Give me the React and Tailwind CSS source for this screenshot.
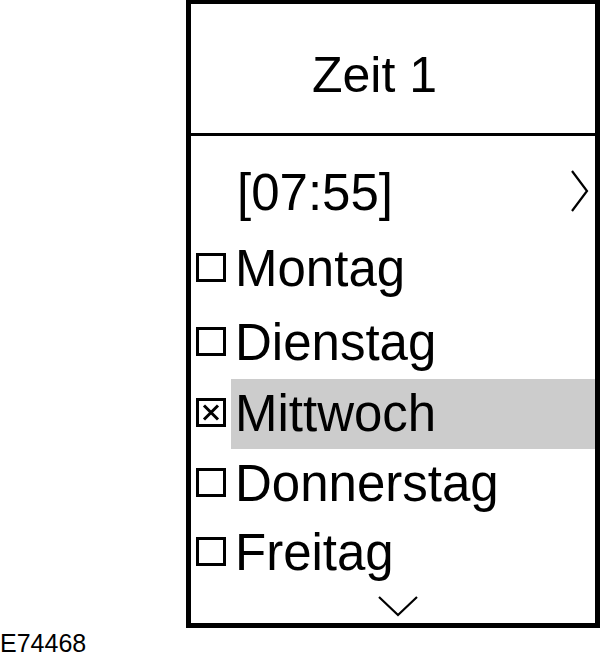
import React from "react";

const font = { fontFamily: '"Liberation Sans", Arial, sans-serif' };

function Box({ checked }) {
  return (
    <div className="w-[30px] h-[29px] border-[3px] border-black bg-white shrink-0 mt-[19px] ml-[5px] relative">
      {checked && (
        <svg className="absolute inset-0" width="24" height="23" viewBox="0 0 24 23">
          <line x1="5" y1="4.5" x2="19" y2="18.5" stroke="black" strokeWidth="3" />
          <line x1="19" y1="4.5" x2="5" y2="18.5" stroke="black" strokeWidth="3" />
        </svg>
      )}
    </div>
  );
}

function Row({ label, h, checked, selected }) {
  return (
    <div className={`flex items-start ${h}`}>
      <Box checked={checked} />
      <div
        className={`ml-[5px] pl-[4px] flex-1 leading-[70px] h-[70px] text-[51px] text-black ${
          selected ? "bg-[#cccccc]" : ""
        }`}
      >
        {label}
      </div>
    </div>
  );
}

export default function App() {
  return (
    <div className="w-[600px] h-[659px] bg-white relative overflow-hidden" style={font}>
      <div className="ml-[186px] w-[414px] h-[628px] border-[5px] border-t-4 border-black flex flex-col">
        <div className="h-[132px] border-b-[3px] border-black pt-[46px] pl-[121px] text-[50px] leading-[50px] text-black">
          Zeit 1
        </div>
        <div className="pt-[22px] flex flex-col">
          <div className="flex items-start h-[76px]">
            <div className="pl-[46px] flex-1 leading-[70px] h-[70px] text-[51px] text-black">[07:55]</div>
            <svg className="mt-[12px] mr-[6px]" width="18" height="42" viewBox="0 0 18 42">
              <polyline points="1,1 16,21 1,41" fill="none" stroke="black" strokeWidth="2.2" />
            </svg>
          </div>
          <Row label="Montag" h="h-[74px]" />
          <Row label="Dienstag" h="h-[71px]" />
          <Row label="Mittwoch" h="h-[70px]" checked selected />
          <Row label="Donnerstag" h="h-[69px]" />
          <Row label="Freitag" h="h-[68px]" />
          <div className="pl-[187px] pt-[10px]">
            <svg width="40" height="21" viewBox="0 0 40 21">
              <polyline points="1,1 20,19 39,1" fill="none" stroke="black" strokeWidth="2.2" />
            </svg>
          </div>
        </div>
      </div>
      <div className="mt-[3px] text-[25px] leading-[25px] text-black">E74468</div>
    </div>
  );
}
